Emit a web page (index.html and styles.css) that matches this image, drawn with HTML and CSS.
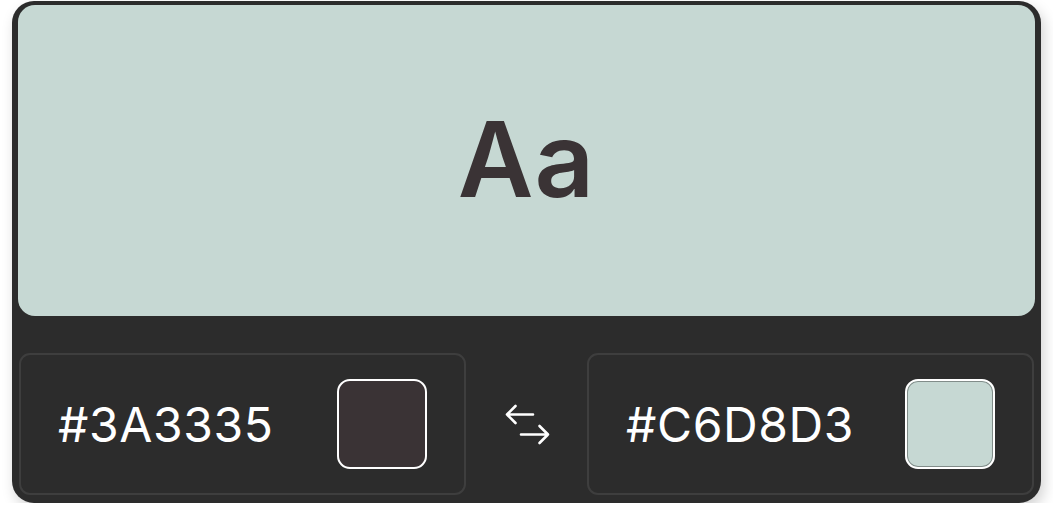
FILE: index.html
```html
<!DOCTYPE html>
<html>
<head>
<meta charset="utf-8">
<link rel="stylesheet" href="styles.css">
</head>
<body>
<div class="card">
  <div class="preview"><span class="sample">Aa</span></div>
  <div class="controls">
    <div class="field">
      <span class="hex">#3A3335</span>
      <span class="swatch swatch-fg"></span>
    </div>
    <div class="swap">
      <svg width="48" height="48" viewBox="0 0 48 48" fill="none" stroke="#fff" stroke-width="2.6" stroke-linecap="round" stroke-linejoin="round">
        <path d="M4 14.5 H30 M4 14.5 L12.5 6 M4 14.5 L12.5 23"/>
        <path d="M18 34.5 H45 M45 34.5 L36.5 26 M45 34.5 L36.5 43"/>
      </svg>
    </div>
    <div class="field">
      <span class="hex">#C6D8D3</span>
      <span class="swatch swatch-bg"></span>
    </div>
  </div>
</div>
</body>
</html>
```
FILE: styles.css
```css
html, body {
  margin: 0;
  padding: 0;
  background: #ffffff;
}
body {
  padding: 1px 12px 0 12px;
  font-family: Inter, "Noto Sans", sans-serif;
}
.card {
  width: 1029px;
  height: 502px;
  box-sizing: border-box;
  background: #2c2c2c;
  border-radius: 22px;
  padding: 4px 6px 7px 6px;
  display: flex;
  flex-direction: column;
  box-shadow: 3px 6px 14px rgba(0, 0, 0, 0.18);
}
.preview {
  height: 311px;
  background: #c6d8d3;
  border-radius: 17px;
  display: flex;
  align-items: center;
  justify-content: center;
}
.sample {
  font-size: 104px;
  font-weight: 600;
  color: #3a3335;
  letter-spacing: 1px;
  line-height: 1;
  margin-top: -4px;
}
.controls {
  margin-top: 37px;
  display: flex;
  align-items: stretch;
  height: 142px;
  padding: 0 1px;
}
.field {
  flex: 0 0 447px;
  box-sizing: border-box;
  border: 2px solid #3e3e3e;
  border-radius: 11px;
  display: flex;
  align-items: center;
  justify-content: space-between;
  padding: 0 37px 0 37px;
}
.hex {
  color: #ffffff;
  font-size: 48px;
  font-weight: 400;
  letter-spacing: 0.6px;
}
.swatch {
  width: 86px;
  height: 86px;
  border: 2px solid #ffffff;
  border-radius: 13px;
  box-sizing: content-box;
}
.swatch-fg {
  background: #3a3335;
}
.swatch-bg {
  background: #c6d8d3;
  box-shadow: inset 0 0 0 1px rgba(0, 0, 0, 0.35);
}
.swap {
  flex: 1;
  display: flex;
  align-items: center;
  justify-content: center;
}
```
